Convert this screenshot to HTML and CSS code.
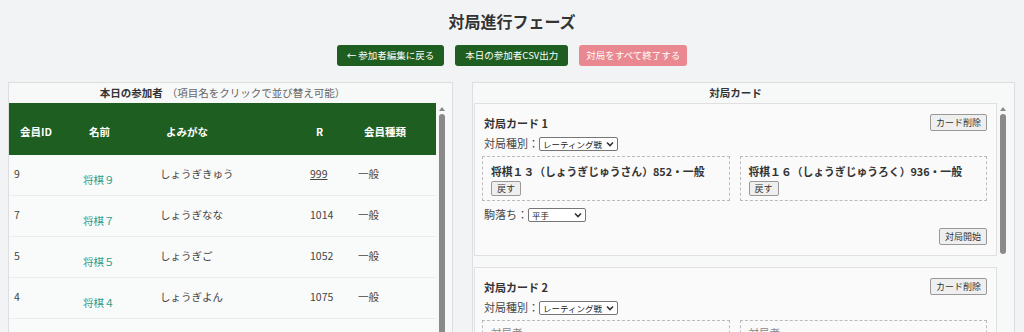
FILE: index.html
```html
<!DOCTYPE html>
<html lang="ja">

<head>
    <meta charset="UTF-8">
    <meta name="viewport" content="width=device-width, initial-scale=1.0">
    <title>対局進行フェーズ</title>
    <link rel="stylesheet" href="styles.css">
</head>

<body>
    <h1 class="page-title">対局進行フェーズ</h1>
    <div class="actions">
        <button class="btn btn-green">← 参加者編集に戻る</button>
        <button class="btn btn-green">本日の参加者CSV出力</button>
        <button class="btn btn-pink">対局をすべて終了する</button>
    </div>

    <div class="panels">
        <section class="panel panel-left">
            <div class="panel-head head-left"><b>本日の参加者</b><span class="note">（項目名をクリックで並び替え可能）</span></div>
            <div class="scroll">
                <div class="scroll-body">
                    <table class="members">
                        <colgroup>
                            <col style="width: 69px">
                            <col style="width: 77px">
                            <col style="width: 150px">
                            <col style="width: 48px">
                            <col style="width: 83px">
                        </colgroup>
                        <thead>
                            <tr>
                                <th>会員ID</th>
                                <th>名前</th>
                                <th>よみがな</th>
                                <th>R</th>
                                <th>会員種類</th>
                            </tr>
                        </thead>
                        <tbody>
                            <tr><td>9</td><td class="name"><a href="#">将棋９</a></td><td>しょうぎきゅう</td><td><span class="provisional">999</span></td><td>一般</td></tr>
                            <tr><td>7</td><td class="name"><a href="#">将棋７</a></td><td>しょうぎなな</td><td>1014</td><td>一般</td></tr>
                            <tr><td>5</td><td class="name"><a href="#">将棋５</a></td><td>しょうぎご</td><td>1052</td><td>一般</td></tr>
                            <tr><td>4</td><td class="name"><a href="#">将棋４</a></td><td>しょうぎよん</td><td>1075</td><td>一般</td></tr>
                            <tr><td>3</td><td class="name"><a href="#">将棋３</a></td><td>しょうぎさん</td><td>1103</td><td>一般</td></tr>
                            <tr><td>11</td><td class="name"><a href="#">将棋１１</a></td><td>しょうぎじゅういち</td><td>1120</td><td>一般</td></tr>
                            <tr><td>2</td><td class="name"><a href="#">将棋２</a></td><td>しょうぎに</td><td>1146</td><td>一般</td></tr>
                            <tr><td>14</td><td class="name"><a href="#">将棋１４</a></td><td>しょうぎじゅうよん</td><td>1188</td><td>一般</td></tr>
                        </tbody>
                    </table>
                </div>
                <div class="scrollbar">
                    <span class="sb-up"></span>
                    <span class="sb-thumb thumb-left"></span>
                </div>
            </div>
        </section>

        <section class="panel panel-right">
            <div class="panel-head head-right"><b>対局カード</b></div>
            <div class="scroll">
                <div class="scroll-body cards">
                    <div class="card">
                        <div class="card-top">
                            <span class="card-title">対局カード 1</span>
                            <button class="btn-sm">カード削除</button>
                        </div>
                        <div class="row">対局種別：<select class="sel sel-kind"><option>レーティング戦</option><option>練習対局</option></select></div>
                        <div class="players">
                            <div class="player">
                                <div class="player-name">将棋１３（しょうぎじゅうさん）852・一般</div>
                                <button class="btn-sm btn-back">戻す</button>
                            </div>
                            <div class="player">
                                <div class="player-name">将棋１６（しょうぎじゅうろく）936・一般</div>
                                <button class="btn-sm btn-back">戻す</button>
                            </div>
                        </div>
                        <div class="row">駒落ち：<select class="sel sel-hc"><option>平手</option><option>香落ち</option><option>角落ち</option></select></div>
                        <div class="card-bottom"><button class="btn-sm">対局開始</button></div>
                    </div>

                    <div class="card">
                        <div class="card-top">
                            <span class="card-title">対局カード 2</span>
                            <button class="btn-sm">カード削除</button>
                        </div>
                        <div class="row">対局種別：<select class="sel sel-kind"><option>レーティング戦</option><option>練習対局</option></select></div>
                        <div class="players">
                            <div class="player empty"><div class="player-label">対局者</div><div class="player-hint">参加者をクリック</div></div>
                            <div class="player empty"><div class="player-label">対局者</div><div class="player-hint">参加者をクリック</div></div>
                        </div>
                        <div class="row">駒落ち：<select class="sel sel-hc"><option>平手</option></select></div>
                        <div class="card-bottom"><button class="btn-sm">対局開始</button></div>
                    </div>

                    <div class="card">
                        <div class="card-top">
                            <span class="card-title">対局カード 3</span>
                            <button class="btn-sm">カード削除</button>
                        </div>
                        <div class="row">対局種別：<select class="sel sel-kind"><option>レーティング戦</option></select></div>
                        <div class="players">
                            <div class="player empty"><div class="player-label">対局者</div><div class="player-hint">参加者をクリック</div></div>
                            <div class="player empty"><div class="player-label">対局者</div><div class="player-hint">参加者をクリック</div></div>
                        </div>
                        <div class="row">駒落ち：<select class="sel sel-hc"><option>平手</option></select></div>
                        <div class="card-bottom"><button class="btn-sm">対局開始</button></div>
                    </div>
                </div>
                <div class="scrollbar">
                    <span class="sb-up"></span>
                    <span class="sb-thumb thumb-right"></span>
                </div>
            </div>
        </section>
    </div>
</body>

</html>
```

FILE: styles.css
```css
body {
    margin: 0 8px;
    background-color: #f2f3f4;
    color: #333;
    font-family: "Noto Sans CJK JP", "Noto Sans", sans-serif;
    overflow: hidden;
}

.page-title {
    margin: 12px 0 0;
    font-size: 16px;
    line-height: 18px;
    text-align: center;
    color: #333;
}

.actions {
    display: flex;
    justify-content: center;
    gap: 11px;
    margin-top: 15px;
}

.btn {
    font-family: inherit;
    font-size: 9.5px;
    line-height: 15px;
    padding: 3px 7px;
    border: none;
    border-radius: 3px;
    color: #fff;
}

.btn-green {
    background-color: #1e5e20;
    padding: 3px 10px;
}

.btn-pink {
    background-color: #e98891;
}

.panels {
    display: grid;
    grid-template-columns: 445px 543px;
    gap: 19px;
    margin-top: 16px;
}

.panel {
    border: 1px solid #dedede;
    background-color: #f7f8f8;
}

.panel-left {
    padding-right: 4px;
}

.panel-right {
    padding: 0 5px 0 1px;
}

.panel-head {
    height: 20px;
    line-height: 20px;
    text-align: center;
    font-size: 10.5px;
}

.head-left {
    padding-right: 12px;
}

.head-right {
    padding-right: 12px;
}

.note {
    color: #666;
    margin-left: 4px;
}

/* scroll area with a drawn scrollbar */
.scroll {
    display: flex;
    height: 410px;
}

.scroll-body {
    flex: 1;
    overflow: hidden;
}

.scrollbar {
    width: 12px;
    flex: none;
    display: flex;
    flex-direction: column;
    align-items: center;
}

.sb-up {
    width: 0;
    height: 0;
    margin-top: 4px;
    border-left: 3px solid transparent;
    border-right: 3px solid transparent;
    border-bottom: 4px solid #8a8a8a;
}

.sb-thumb {
    width: 6px;
    margin-top: 3px;
    border-radius: 3px;
    background-color: #8a8a8a;
}

.thumb-left {
    height: 280px;
}

.thumb-right {
    height: 140px;
}

/* participants table */
.members {
    width: 427px;
    border-collapse: collapse;
    table-layout: fixed;
    font-size: 10.5px;
    line-height: 16px;
}

.members th {
    background-color: #1e5e20;
    color: #fff;
    text-align: left;
    padding: 21px 5px 15px 11px;
    cursor: pointer;
}

.members td {
    background-color: #f9fafa;
    color: #444;
    vertical-align: top;
    padding: 11px 5px 13px;
    border-bottom: 1px solid #ececec;
    white-space: nowrap;
}

.members td.name {
    padding: 17px 5px 7px;
}

.name a {
    color: #2f9a88;
    text-decoration: none;
}

.provisional {
    text-decoration: underline;
}

/* match cards */
.card {
    border: 1px solid #e0e0e0;
    background-color: #fafafa;
    padding: 10px 9px 10px 7px;
    margin-bottom: 11px;
    font-size: 11px;
    color: #444;
}

.card-top {
    display: flex;
    justify-content: space-between;
    align-items: center;
    padding-left: 2px;
}

.card-title {
    font-weight: bold;
    color: #333;
}

.btn-sm {
    font-family: inherit;
    font-size: 9px;
    line-height: 11px;
    padding: 2px 5px;
    border: 1px solid #999;
    border-radius: 2px;
    background-color: #efefef;
    color: #333;
}

.row {
    display: flex;
    align-items: center;
    height: 13px;
    margin-top: 6px;
    padding-left: 2px;
    line-height: 13px;
}

.sel {
    appearance: none;
    height: 14px;
    font-family: inherit;
    font-size: 8.5px;
    line-height: 12px;
    padding: 0 0 0 3px;
    border: 1px solid #767676;
    border-radius: 2px;
    background: #fff url("data:image/svg+xml;utf8,<svg xmlns='http://www.w3.org/2000/svg' width='8' height='6'><path d='M1 1.5 L4 4.5 L7 1.5' stroke='%23333' stroke-width='1.6' fill='none'/></svg>") no-repeat right 3px center;
    color: #222;
}

.sel-kind {
    width: 79px;
}

.sel-hc {
    width: 58px;
}

.players {
    display: flex;
    gap: 10px;
    margin: 6px 0 7px;
}

.player {
    flex: 1 1 0;
    border: 1px dashed #bbb;
    padding: 6px 8px 8px;
    height: 45px;
    box-sizing: border-box;
}

.player-name {
    font-weight: bold;
    font-size: 10.8px;
    line-height: 16px;
    color: #333;
    white-space: nowrap;
}

.btn-back {
    padding: 1px 5px;
    font-size: 9px;
}

.player.empty {
    padding-top: 4px;
}

.player-label {
    color: #888;
    font-size: 10.5px;
    line-height: 16px;
}

.player-hint {
    color: #aaa;
    font-size: 9px;
}

.card-bottom {
    display: flex;
    justify-content: flex-end;
    margin-top: 7px;
}
```
